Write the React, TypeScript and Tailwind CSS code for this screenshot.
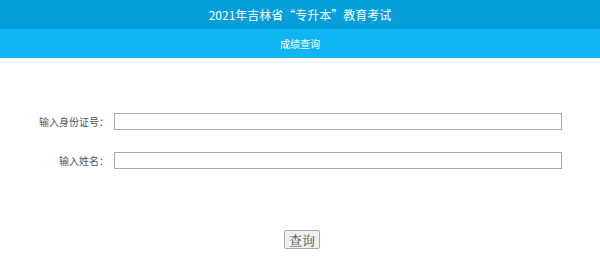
export default function App() {
  return (
    <div className="w-[600px] h-[274px] bg-white font-['Noto_Sans_CJK_SC',sans-serif]">
      <div className="h-[29px] bg-[#049fdb] flex items-center justify-center text-white text-[12px]">
        2021年吉林省“专升本”教育考试
      </div>
      <div className="h-[29px] bg-[#12b5f3] flex items-center justify-center text-white text-[10px]">
        成绩查询
      </div>
      <div className="pt-[55px] flex flex-col gap-[22px]">
        <div className="flex items-center">
          <label className="w-[114px] text-right text-[10px] text-[#555] pr-[5px]">输入身份证号：</label>
          <input className="w-[448px] h-[17px] border border-[#a9a9a9] outline-none" />
        </div>
        <div className="flex items-center">
          <label className="w-[114px] text-right text-[10px] text-[#555] pr-[5px]">输入姓名：</label>
          <input className="w-[448px] h-[17px] border border-[#a9a9a9] outline-none" />
        </div>
      </div>
      <div className="flex justify-center pt-[61px] pl-[4px]">
        <button className="w-[36px] h-[19px] bg-[#efefef] border border-[#a9a9a9] rounded-[2px] text-[13px] text-[#555] leading-none font-['Noto_Serif_CJK_SC','Noto_Sans_CJK_SC',serif]">
          查询
        </button>
      </div>
    </div>
  )
}
